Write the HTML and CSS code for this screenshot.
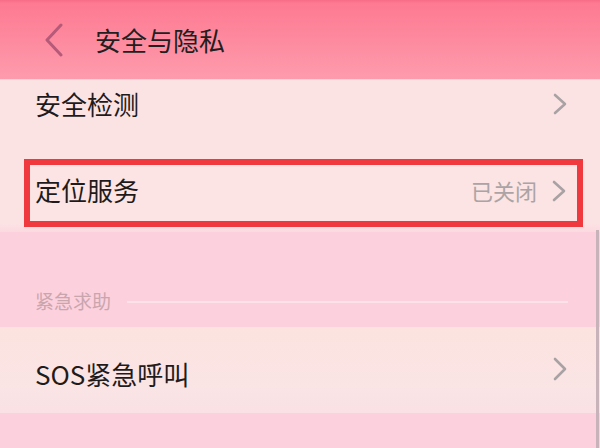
FILE: index.html
```html
<!DOCTYPE html>
<html lang="zh-CN">
<head>
<meta charset="utf-8">
<link rel="stylesheet" href="styles.css">
</head>
<body>
<div class="screen">
  <header class="topbar">
    <svg class="back" width="20" height="34" viewBox="0 0 20 34"><path d="M17 2 L3 17 L17 32" fill="none" stroke="#b65a7a" stroke-width="3" stroke-linecap="round" stroke-linejoin="round"/></svg>
    <h1 class="title">安全与隐私</h1>
  </header>
  <div class="row row-first">
    <span class="label">安全检测</span>
    <svg class="chev" width="16" height="22" viewBox="0 0 16 22"><path d="M3 2 L13 11 L3 20" fill="none" stroke="#a9a2a4" stroke-width="2.6" stroke-linecap="round" stroke-linejoin="round"/></svg>
  </div>
  <div class="row-wrap">
    <div class="row row-boxed">
      <span class="label">定位服务</span>
      <span class="value">已关闭</span>
      <svg class="chev" width="16" height="22" viewBox="0 0 16 22"><path d="M3 2 L13 11 L3 20" fill="none" stroke="#a9a2a4" stroke-width="2.6" stroke-linecap="round" stroke-linejoin="round"/></svg>
    </div>
  </div>
  <div class="section">
    <span class="section-label">紧急求助</span>
    <span class="section-line"></span>
  </div>
  <div class="row row-sos">
    <span class="label">SOS紧急呼叫</span>
    <svg class="chev" width="16" height="24" viewBox="0 0 16 24"><path d="M3 2 L13 12 L3 22" fill="none" stroke="#a9a2a4" stroke-width="2.6" stroke-linecap="round" stroke-linejoin="round"/></svg>
  </div>
  <div class="bottom"></div>
  <div class="scrollbar"></div>
</div>
</body>
</html>
```

FILE: styles.css
```css
* { box-sizing: border-box; margin: 0; padding: 0; }
html, body { width: 600px; height: 448px; overflow: hidden; }
body {
  font-family: "Noto Sans CJK SC", "Noto Sans", sans-serif;
  background: #fdd0dd;
}
.screen {
  position: relative;
  width: 600px;
  height: 448px;
  display: flex;
  flex-direction: column;
}
.topbar {
  height: 80px;
  flex: none;
  display: flex;
  align-items: center;
  padding-left: 44px;
  background: linear-gradient(#f56c87 0, #fd7a92 3px, #fd8a9f 40px, #fd9cad 80px);
  border-bottom: 1px solid #fbd0d8;
}
.back { margin-right: 31px; margin-top: 0; }
.title {
  font-size: 26px;
  font-weight: 400;
  color: #231e20;
  letter-spacing: 0;
  line-height: 30px;
}
.row {
  display: flex;
  align-items: center;
  color: #1f1b1c;
  font-size: 26px;
}
.label { flex: 1; line-height: 30px; }
.value {
  font-size: 22px;
  color: #aba3a5;
  margin-right: 14px;
  line-height: 30px;
}
.chev { flex: none; }
.row-first {
  height: 75px;
  align-items: flex-start;
  padding: 9px 32px 0 35px;
  background: #fbe3e4;
}
.row-first .chev { margin-top: 4px; }
.row-wrap {
  height: 77px;
  padding: 4px 17px 5px 24px;
  background: linear-gradient(#fbe3e4, #fbe2e3 90%, #fcd9e0);
}
.row-boxed {
  height: 68px;
  border: 6px solid #f0393f;
  padding: 0 10px 6px 5px;
  background: #fbe4e3;
}
.row-boxed .chev { margin-top: 2px; }
.section {
  height: 95px;
  display: flex;
  align-items: center;
  padding: 43px 32px 0 35px;
}
.section-label {
  font-size: 19px;
  color: #c9a6ae;
  line-height: 24px;
}
.section-line {
  flex: 1;
  height: 2px;
  margin-left: 16px;
  margin-top: 2px;
  background: #fde3e9;
}
.row-sos {
  height: 86px;
  padding: 0 32px 0 35px;
  background: linear-gradient(#fce3e0, #fae4e4 70%, #f9e1e5);
}
.row-sos .label { margin-top: 8px; }
.row-sos .chev { margin-top: -2px; }
.bottom { flex: 1; background: #fdd0dd; }
.scrollbar {
  position: absolute;
  right: 1px;
  top: 230px;
  width: 3px;
  height: 218px;
  background: #c9b3ba;
}
```
